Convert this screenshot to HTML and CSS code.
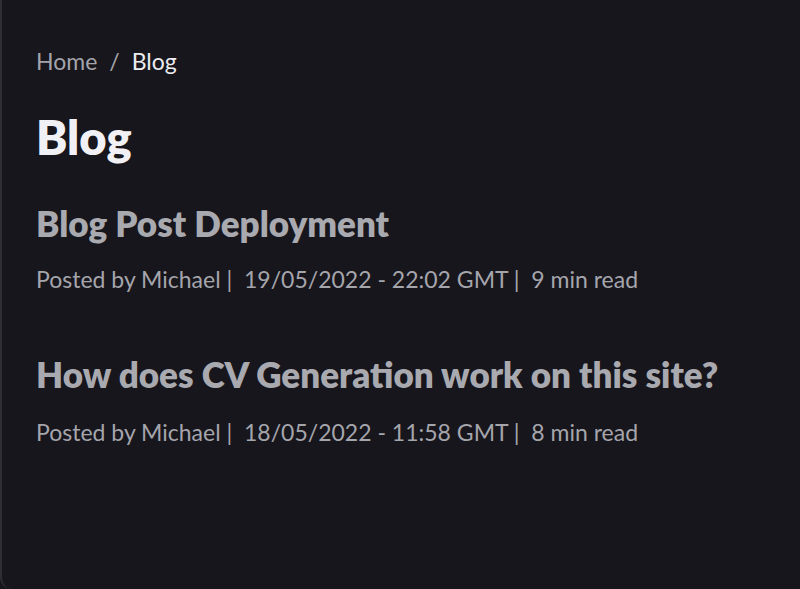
FILE: index.html
```html
<!DOCTYPE html>
<html lang="en">
<head>
<meta charset="utf-8">
<title>Blog</title>
<link rel="stylesheet" href="styles.css">
</head>
<body>
<div class="frame">
  <main class="content">
    <nav class="breadcrumb">
      <a class="crumb" href="#">Home</a>
      <span class="sep">/</span>
      <span class="crumb current">Blog</span>
    </nav>
    <h1 class="page-title">Blog</h1>
    <article class="post">
      <h2 class="post-title">Blog Post Deployment</h2>
      <p class="post-meta">Posted by Michael |&nbsp; 19/05/2022 - 22:02 GMT |&nbsp; 9 min read</p>
    </article>
    <article class="post">
      <h2 class="post-title">How does CV Generation work on this site?</h2>
      <p class="post-meta">Posted by Michael |&nbsp; 18/05/2022 - 11:58 GMT |&nbsp; 8 min read</p>
    </article>
  </main>
</div>
</body>
</html>
```

FILE: styles.css
```css
html, body {
  margin: 0;
  padding: 0;
  height: 100%;
  background: #17161c;
}
body {
  font-family: "Lato", "Open Sans", sans-serif;
  color: #a8a8af;
}
.frame {
  box-sizing: border-box;
  height: 100%;
  border-left: 2px solid #2f2e34;
  border-bottom-left-radius: 12px;
  background: #17161c;
}
.content {
  padding: 46px 0 0 34px;
}
.breadcrumb {
  display: flex;
  align-items: baseline;
  gap: 12px;
  font-size: 23px;
  line-height: 30px;
}
.crumb {
  color: #a4a4ab;
  text-decoration: none;
}
.sep {
  color: #a4a4ab;
}
.current {
  color: #ececf1;
}
.page-title {
  margin: 33px 0 0 0;
  font-size: 47px;
  line-height: 56px;
  font-weight: 800;
  color: #f1f1f5;
}
.post {
  margin-top: 36px;
}
.post + .post {
  margin-top: 58px;
}
.post-title {
  margin: 0;
  font-size: 35px;
  line-height: 44px;
  font-weight: 800;
  color: #a9a9b0;
}
.post-meta {
  margin: 19px 0 0 0;
  font-size: 23px;
  line-height: 30px;
  color: #a5a5ac;
}
.post + .post .post-meta {
  margin-top: 21px;
}
```
